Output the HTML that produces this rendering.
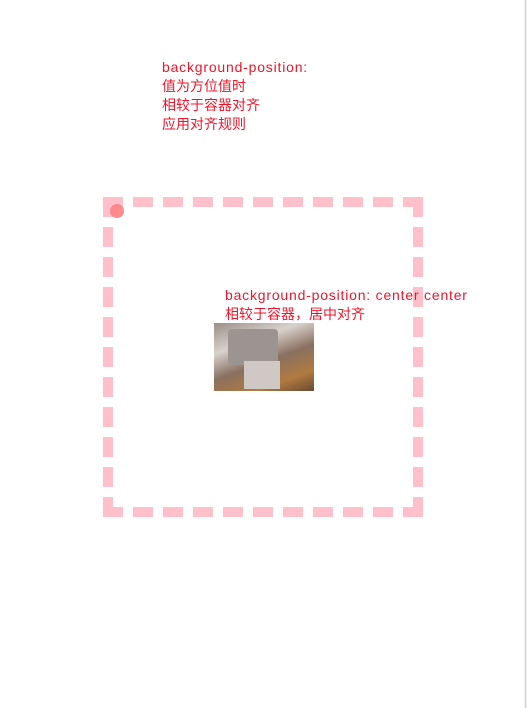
<!DOCTYPE html>
<html><head><meta charset="utf-8"><style>
body{margin:0;width:527px;height:708px;background:#fff;position:relative;overflow:hidden;font-family:"Liberation Sans","Noto Sans CJK SC",sans-serif;color:#f0142a;font-size:14px}
.t{position:absolute;line-height:19px;white-space:nowrap}
.l{letter-spacing:0.8px}
</style></head><body>
<div class="t" style="left:162px;top:58px"><span class="l">background-position:</span><br>值为方位值时<br>相较于容器对齐<br>应用对齐规则</div>
<svg style="position:absolute;left:0;top:0" width="527" height="708">
<g stroke="#ffc0cb" stroke-width="10" stroke-dasharray="20 10" fill="none">
<line x1="103" y1="202" x2="423" y2="202"/>
<line x1="108" y1="197" x2="108" y2="517"/>
<line x1="418" y1="197" x2="418" y2="517"/>
<line x1="103" y1="512" x2="423" y2="512"/>
</g>
<circle cx="117" cy="211" r="7" fill="#ff8080" opacity="0.9"/>
<line x1="525.5" y1="0" x2="525.5" y2="708" stroke="#d0d0d0" stroke-width="1.5"/>
</svg>
<div style="position:absolute;left:214px;top:323px;width:100px;height:68px;background:linear-gradient(160deg,#9a8f88 0%,#d8d2cc 30%,#8a7060 55%,#b07a40 80%,#6a4a30 100%)">
<div style="position:absolute;left:14px;top:6px;width:50px;height:36px;background:#9c9490;border-radius:4px"></div>
<div style="position:absolute;left:30px;top:38px;width:36px;height:28px;background:#cfc8c4"></div>
</div>
<div class="t" style="left:225px;top:286px"><span class="l">background-position: center center</span><br>相较于容器，居中对齐</div>
</body></html>
